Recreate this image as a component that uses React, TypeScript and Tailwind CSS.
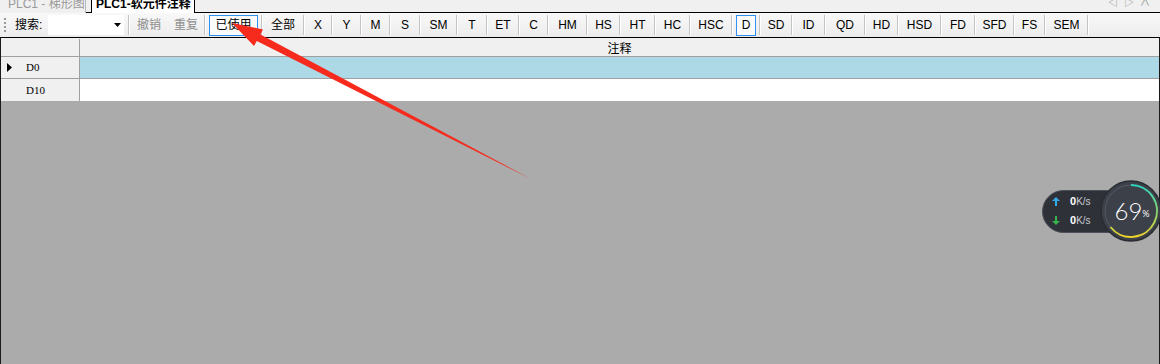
import React from 'react';

// separator centres measured from the screenshot; each button fills the gap between two
const tags: [string, number][] = [
  ['全部', 40], ['X', 26], ['Y', 27], ['M', 27], ['S', 28], ['SM', 35], ['T', 28], ['ET', 30], ['C', 27],
  ['HM', 37], ['HS', 31], ['HT', 33], ['HC', 33], ['HSC', 40], ['D', 26], ['SD', 30], ['ID', 31], ['QD', 38],
  ['HD', 31], ['HSD', 41], ['FD', 32], ['SFD', 37], ['FS', 29], ['SEM', 41],
];

function Sep() {
  return <div className="h-[20px] w-[2px] shrink-0 border-l border-[#c4c4c4] border-r border-r-white"></div>;
}

function ToolBtn({ label, width, active, muted }: { label: string; width: number; active?: boolean; muted?: boolean }) {
  return (
    <div className="flex h-[21px] shrink-0 items-center justify-center px-[3px]" style={{ width }}>
      <div
        className={
          'flex h-[21px] w-full items-center justify-center whitespace-nowrap ' +
          (active ? 'border border-[#2f8ff5] bg-[#fbfbfb] ' : '') +
          (muted ? 'text-[#8d8d8d]' : 'text-black')
        }
      >
        {label}
      </div>
    </div>
  );
}

function Arrow() {
  return (
    <svg className="absolute left-0 top-0 pointer-events-none" width="1160" height="364">
      <polygon points="232,23 263,29.5 260.5,34.5 531,179 256.8,41 254,46" fill="#f62b1d" />
    </svg>
  );
}

function SpeedWidget() {
  return (
    <div className="absolute left-[1042px] top-[180px] flex items-center">
      <div className="flex h-[43px] w-[80px] flex-col justify-center gap-[4px] rounded-l-[22px] border border-[#4a4f58] bg-[#2e3138] pl-[9px] text-[10px] text-white">
        <div className="flex items-center gap-[10px] leading-[14px]">
          <svg width="8" height="9" viewBox="0 0 8 9">
            <path d="M4 0 L8 4 H5 V9 H3 V4 H0 Z" fill="#35a8e6" />
          </svg>
          <span><b className="text-[11px]">0</b><span className="text-[#c8ccd2]">K/s</span></span>
        </div>
        <div className="flex items-center gap-[10px] leading-[14px]">
          <svg width="8" height="9" viewBox="0 0 8 9">
            <path d="M4 9 L8 5 H5 V0 H3 V5 H0 Z" fill="#34b34a" />
          </svg>
          <span><b className="text-[11px]">0</b><span className="text-[#c8ccd2]">K/s</span></span>
        </div>
      </div>
      <div className="relative -ml-[22px] h-[62px] w-[62px]">
        <svg width="62" height="62" viewBox="0 0 62 62" className="absolute left-0 top-0">
          <defs>
            <linearGradient id="ring" x1="0" y1="0" x2="0" y2="1">
              <stop offset="0" stopColor="#2fd3c0" />
              <stop offset="0.55" stopColor="#8fd46a" />
              <stop offset="1" stopColor="#f0d22a" />
            </linearGradient>
          </defs>
          <circle cx="31" cy="31" r="30" fill="#3b4049" stroke="#2a2d33" strokeWidth="1.5" />
          <circle cx="31" cy="31" r="26" fill="none" stroke="#555b66" strokeWidth="1" />
          <path d="M31 5 A26 26 0 1 1 10.5 47" fill="none" stroke="url(#ring)" strokeWidth="2" />
        </svg>
        <div className="absolute inset-0 flex items-center justify-center pl-[2px] text-white" style={{ fontFamily: 'Lato, "Open Sans", sans-serif' }}>
          <span className="text-[24px] font-light leading-none">69</span>
          <span className="mt-[6px] text-[9px]">%</span>
        </div>
      </div>
    </div>
  );
}

export default function App() {
  return (
    <div
      className="relative flex h-[364px] w-[1160px] flex-col overflow-hidden bg-[#ababab] text-[12px]"
      style={{ fontFamily: '"Liberation Sans", "Noto Sans CJK SC", sans-serif' }}
    >
      {/* tabs */}
      <div className="flex h-[13px] items-end whitespace-nowrap bg-[#f0f0f0]">
        <div className="flex h-[13px] w-[86px] items-center overflow-hidden border-r border-[#b9b9b9] pl-[8px] text-[12px] leading-none text-[#9a9a9a]">
          <span className="-mt-[6px]">PLC1 - 梯形图</span>
        </div>
        <div className="h-[13px] w-[5px] border-b border-black"></div>
        <div className="flex h-[13px] w-[104px] items-center overflow-hidden border-x border-black bg-white pl-[4px] font-bold leading-none text-black">
          <span className="-mt-[6px]">PLC1-软元件注释</span>
        </div>
        <div className="flex h-[13px] flex-1 items-start justify-end gap-[6px] border-b border-black pr-[10px] text-[10px] leading-none text-[#8a8a8a]">
          <span className="-mt-[2px]">◁</span>
          <span className="-mt-[2px]">▷</span>
          <span className="-mt-[2px]">∧</span>
        </div>
      </div>

      {/* toolbar */}
      <div className="flex h-[25px] items-center whitespace-nowrap border-b border-black bg-gradient-to-b from-[#f8f8f8] to-[#ececec] pl-[4px]">
        <div className="mr-[9px] flex h-[16px] flex-col justify-between py-[1px]">
          {[0, 1, 2, 3].map((i) => (
            <div key={i} className="h-[2px] w-[2px] bg-[#9a9a9a]"></div>
          ))}
        </div>
        <span className="w-[33px] shrink-0">搜索:</span>
        <div className="flex h-[20px] w-[76px] shrink-0 items-center justify-end bg-white pr-[3px]">
          <svg width="7" height="4" viewBox="0 0 7 4">
            <path d="M0 0 H7 L3.5 4 Z" fill="#000" />
          </svg>
        </div>
        <div className="w-[4px] shrink-0"></div>
        <Sep />
        <ToolBtn label="撤销" width={38} muted />
        <ToolBtn label="重复" width={36} muted />
        <Sep />
        <ToolBtn label="已使用" width={55} active />
        {tags.map(([t, w]) => (
          <React.Fragment key={t}>
            <Sep />
            <ToolBtn label={t} width={w} active={t === 'D'} />
          </React.Fragment>
        ))}
        <Sep />
      </div>

      {/* grid */}
      <div className="flex flex-1 flex-col border-x border-[#1a1a1a]">
        <div className="flex h-[19px] border-b border-[#a0a0a0] bg-[#f0f0f0] pt-[1px]">
          <div className="w-[79px] border-r border-[#a0a0a0]"></div>
          <div className="flex flex-1 items-center justify-center leading-none" style={{ fontFamily: '"Noto Sans CJK SC", sans-serif' }}>注释</div>
        </div>
        <div className="flex h-[22px] border-b border-[#a0a0a0]">
          <div className="flex w-[79px] items-center border-r border-[#a0a0a0] bg-[#f0f0f0] pl-[6px]" style={{ fontFamily: '"Liberation Serif", serif' }}>
            <svg width="5" height="9" viewBox="0 0 5 9">
              <path d="M0 0 L5 4.5 L0 9 Z" fill="#000" />
            </svg>
            <span className="ml-[14px] text-[11px]">D0</span>
          </div>
          <div className="flex-1 bg-[#add8e6]"></div>
        </div>
        <div className="flex h-[22px]">
          <div className="flex w-[79px] items-center border-r border-[#a0a0a0] bg-[#f0f0f0] pl-[25px] text-[11px]" style={{ fontFamily: '"Liberation Serif", serif' }}>
            D10
          </div>
          <div className="flex-1 bg-white"></div>
        </div>
        <div className="flex-1 bg-[#ababab]"></div>
      </div>

      <Arrow />
      <SpeedWidget />
    </div>
  );
}
